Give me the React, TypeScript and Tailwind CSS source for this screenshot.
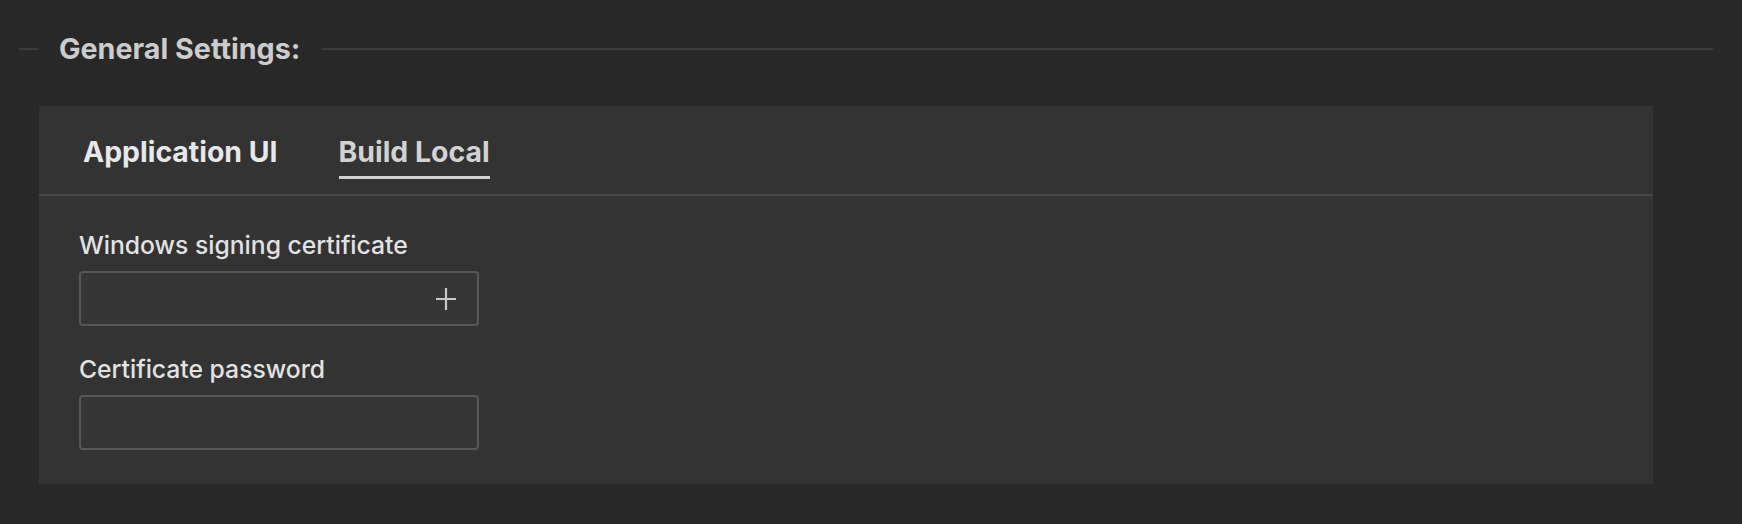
const font = { fontFamily: "Inter, 'Noto Sans', sans-serif" };

function Field({ label, icon }: { label: string; icon?: boolean }) {
  return (
    <div className="flex flex-col">
      <label className="text-[24.7px] font-medium leading-[30px] text-[#e2e2e2]">
        {label}
      </label>
      <div className="mt-[11px] flex h-[55px] w-[400px] items-center justify-end rounded-[4px] border-2 border-[#575757] bg-[#363636] pr-[21px]">
        {icon && (
          <svg width="20" height="22" viewBox="0 0 20 22" className="text-[#c8c8c8]">
            <path d="M10 0v22M0 11h20" stroke="currentColor" strokeWidth="2.2" fill="none" />
          </svg>
        )}
      </div>
    </div>
  );
}

export default function App() {
  return (
    <div className="h-[524px] w-full bg-[#282828] pt-[31px]" style={font}>
      {/* legend row */}
      <div className="flex items-center pl-[19px] pr-[29px]">
        <div className="h-[2px] w-[20px] bg-[#3a3a3a]" />
        <span className="pl-[20px] pr-[21px] text-[28.7px] font-bold leading-[36px] text-[#cccccc]">
          General Settings:
        </span>
        <div className="h-[2px] flex-1 bg-[#3a3a3a]" />
      </div>

      <div className="ml-[39px] mt-[39px] h-[378px] w-[1614px] bg-[#333333]">
        <div className="flex items-start gap-[61px] border-b-2 border-[#474747] pb-[15px] pl-[44px] pt-[28px]">
          <button className="border-b-[3px] border-transparent pb-[6px] text-[28.4px] font-bold leading-[36px] text-[#e8e8e8]">
            Application UI
          </button>
          <button className="border-b-[3px] border-[#d0d0d0] pb-[6px] text-[28.4px] font-bold leading-[36px] text-[#d2d2d2]">
            Build Local
          </button>
        </div>
        <div className="flex flex-col gap-[28px] pl-[40px] pt-[34px]">
          <Field label="Windows signing certificate" icon />
          <Field label="Certificate password" />
        </div>
      </div>
    </div>
  );
}
